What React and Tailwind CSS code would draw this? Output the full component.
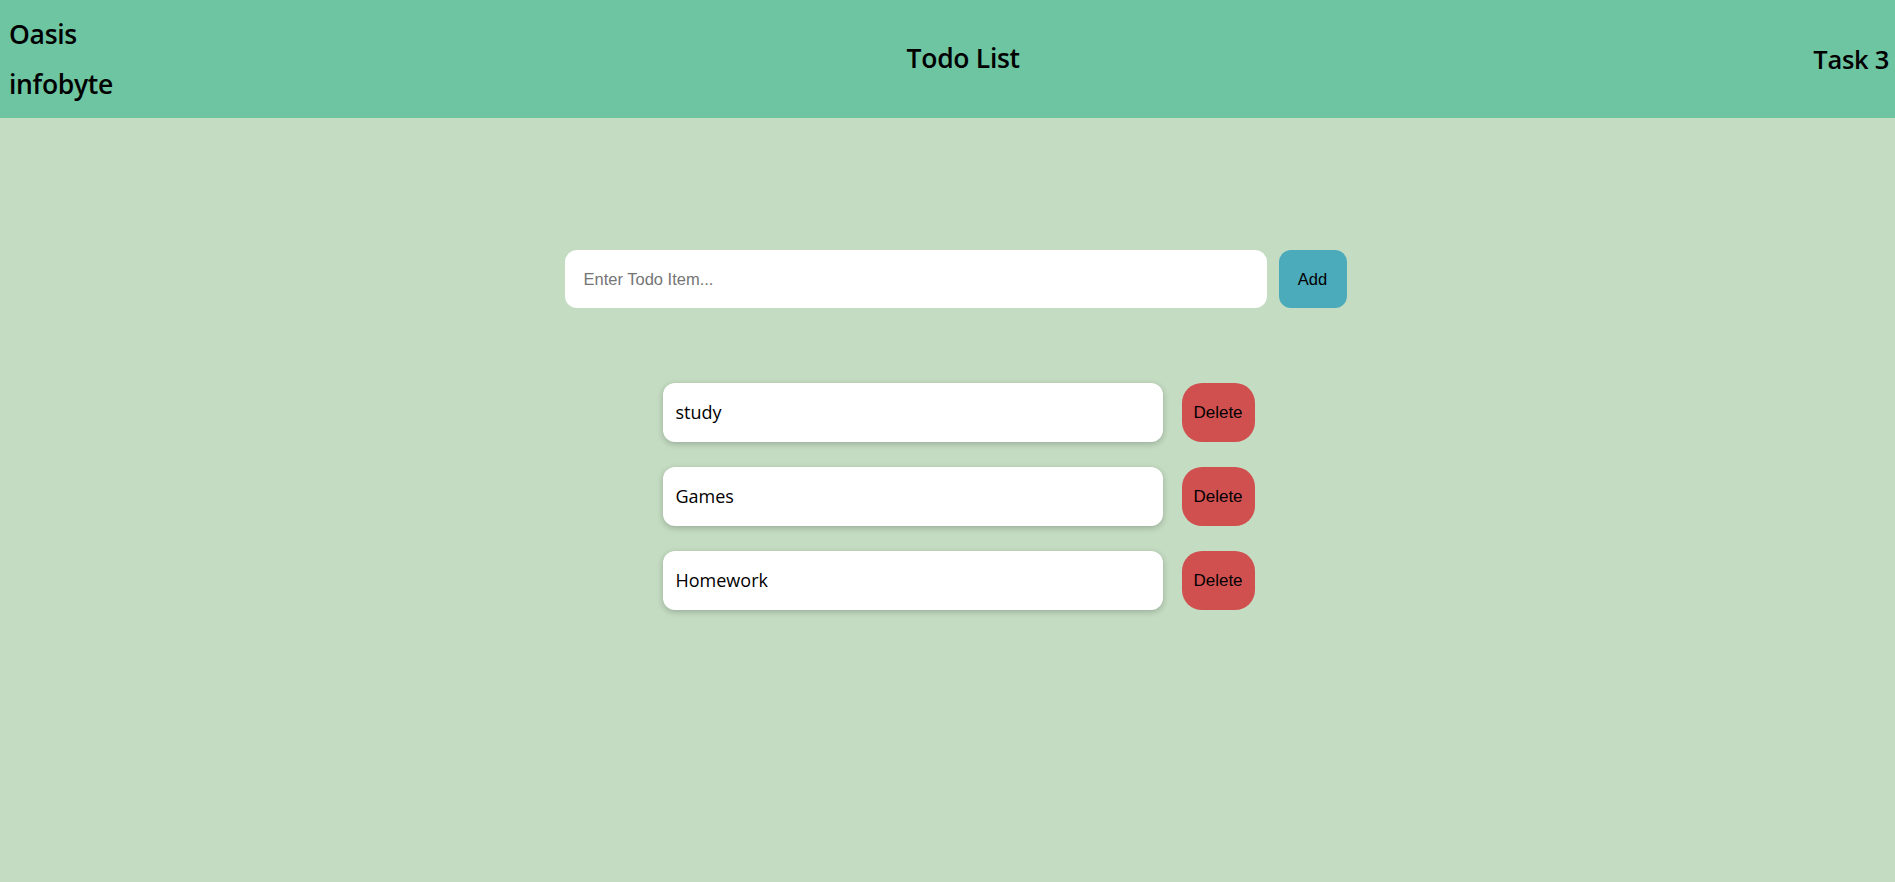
export default function App() {
  const items = ["study", "Games", "Homework"];
  const head = { fontFamily: '"Open Sans", "Noto Sans", sans-serif' };
  const arial = { fontFamily: '"Liberation Sans", Arial, sans-serif' };
  return (
    <div className="min-h-[882px] w-full bg-[#c4dcc2]">
      <header className="flex h-[118px] items-center justify-between bg-[#6ec5a2] pl-[9px] pr-[6px] text-black" style={head}>
        <div className="text-[26.5px] font-semibold leading-[50px] tracking-[-0.3px]">
          <div>Oasis</div>
          <div>infobyte</div>
        </div>
        <div className="text-[26.5px] font-semibold tracking-[-0.3px]">Todo List</div>
        <div className="text-[25.5px] font-semibold tracking-[-0.3px]">Task 3</div>
      </header>
      <main className="flex flex-col items-center pl-[16px] pt-[132px]">
        <div className="flex gap-[12px]">
          <input
            placeholder="Enter Todo Item..."
            className="h-[58px] w-[702px] rounded-[12px] bg-white px-[19px] text-[16.5px] text-black outline-none placeholder:text-[#757575]"
            style={arial}
          />
          <button className="h-[58px] w-[68px] rounded-[12px] bg-[#4babbb] text-[16.5px] text-black" style={arial}>
            Add
          </button>
        </div>
        <div className="mt-[75px] flex flex-col gap-[25px] pl-[6px]">
          {items.map((t) => (
            <div key={t} className="flex gap-[19px]">
              <div
                className="flex h-[59px] w-[500px] items-center rounded-[12px] bg-white pl-[13px] text-[18px] text-black shadow-[0_2px_6px_rgba(0,0,0,0.22)]"
                style={head}
              >
                {t}
              </div>
              <button className="h-[59px] w-[73px] rounded-[20px] bg-[#d05050] text-[17px] text-black" style={arial}>
                Delete
              </button>
            </div>
          ))}
        </div>
      </main>
    </div>
  );
}
